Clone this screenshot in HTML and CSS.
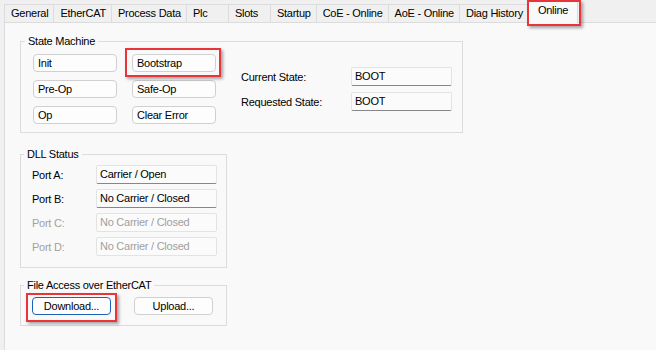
FILE: index.html
```html
<!DOCTYPE html>
<html lang="en">
<head>
    <meta charset="UTF-8">
    <title>Online</title>
    <link rel="stylesheet" href="styles.css">
</head>
<body>
    <div class="tabs">
        <div class="tab">General</div>
        <div class="tab">EtherCAT</div>
        <div class="tab">Process Data</div>
        <div class="tab tab-narrow">Plc</div>
        <div class="tab tab-narrow">Slots</div>
        <div class="tab">Startup</div>
        <div class="tab">CoE - Online</div>
        <div class="tab">AoE - Online</div>
        <div class="tab">Diag History</div>
        <div class="tab active marked">Online</div>
    </div>

    <div class="panel">
        <!-- State machine -->
        <fieldset class="group state-group">
            <legend>State Machine</legend>
            <div class="state-body">
                <div class="state-buttons">
                    <button class="btn">Init</button>
                    <button class="btn marked">Bootstrap</button>
                    <button class="btn">Pre-Op</button>
                    <button class="btn">Safe-Op</button>
                    <button class="btn">Op</button>
                    <button class="btn">Clear Error</button>
                </div>
                <div class="state-info">
                    <span class="label">Current State:</span>
                    <div class="field">BOOT</div>
                    <span class="label">Requested State:</span>
                    <div class="field">BOOT</div>
                </div>
            </div>
        </fieldset>

        <!-- DLL status -->
        <fieldset class="group small-group">
            <legend>DLL Status</legend>
            <div class="ports">
                <span class="label">Port A:</span>
                <div class="field">Carrier / Open</div>
                <span class="label">Port B:</span>
                <div class="field">No Carrier / Closed</div>
                <span class="label disabled">Port C:</span>
                <div class="field disabled">No Carrier / Closed</div>
                <span class="label disabled">Port D:</span>
                <div class="field disabled">No Carrier / Closed</div>
            </div>
        </fieldset>

        <!-- File access -->
        <fieldset class="group small-group file-group">
            <legend>File Access over EtherCAT</legend>
            <div class="file-buttons">
                <button class="btn btn-center focused marked">Download...</button>
                <button class="btn btn-center">Upload...</button>
            </div>
        </fieldset>
    </div>
</body>
</html>
```

FILE: styles.css
```css
/* Dialog look, Windows style */
body {
    margin: 0;
    background-color: #f0f0f0;
    color: #000000;
    font-family: "Liberation Sans", Arial, sans-serif;
    font-size: 11px;
    letter-spacing: -0.25px;
    height: 350px;
    overflow: hidden;
}

/* Tab strip */
.tabs {
    display: flex;
    align-items: flex-end;
    height: 22px;
    padding-left: 4px;
}

.tab {
    box-sizing: border-box;
    height: 18px;
    line-height: 17px;
    padding: 0 5px 0 6px;
    border: 1px solid #dcdcdc;
    border-bottom: none;
    margin-left: -1px;
    background-color: #f0f0f0;
    white-space: nowrap;
}

.tab:first-child {
    margin-left: 0;
}

.tab-narrow {
    min-width: 43px;
}

.tab.active {
    position: relative;
    z-index: 1;
    height: 22px;
    line-height: 16px;
    margin-bottom: -1px;
    padding: 0 9px;
    background-color: #f9f9f9;
}

/* Red annotation frames */
.marked {
    position: relative;
}

.marked::after {
    content: "";
    position: absolute;
    top: -7px;
    left: -8px;
    right: -6px;
    bottom: -6px;
    border: 2px solid #e8353b;
    box-shadow: 2px 2px 3px rgba(0, 0, 0, 0.35);
    pointer-events: none;
}

.tab.marked::after {
    top: -2px;
    left: -2px;
    right: -4px;
    bottom: -3px;
}

.file-buttons .marked::after {
    top: -5px;
    left: -7px;
    right: -7px;
    bottom: -8px;
}

/* Content panel */
.panel {
    box-sizing: border-box;
    width: 670px;
    height: 340px;
    margin-left: 4px;
    padding: 11px 0 0 15px;
    border: 1px solid #dcdcdc;
    background-color: #f9f9f9;
}

/* Group boxes */
.group {
    box-sizing: border-box;
    min-width: 0;
    margin: 0;
    border: 1px solid #dcdcdc;
}

.group legend {
    padding: 0 3px;
    margin-left: -8px;
    line-height: 14px;
}

.state-group {
    width: 443px;
    padding: 6px 0 8px 12px;
}

.small-group {
    width: 207px;
    margin-top: 14px;
    padding: 4px 9px 11px 11px;
}

.file-group {
    margin-top: 10px;
    padding: 5px 9px 10px 11px;
}

.state-body {
    display: flex;
    align-items: center;
    gap: 25px;
}

.state-buttons {
    display: grid;
    grid-template-columns: 84px 84px;
    column-gap: 15px;
    row-gap: 8px;
}

.state-info {
    display: grid;
    grid-template-columns: 110px 101px;
    row-gap: 6px;
    align-items: center;
}

.ports {
    display: grid;
    grid-template-columns: 64px 121px;
    row-gap: 5px;
    align-items: center;
}

.file-buttons {
    display: flex;
    gap: 23px;
}

/* Buttons */
.btn {
    box-sizing: border-box;
    height: 18px;
    padding: 0 4px;
    border: 1px solid #d0d0d0;
    border-radius: 4px;
    background-color: #fdfdfd;
    color: #000000;
    font-family: inherit;
    font-size: 11px;
    letter-spacing: -0.25px;
    line-height: 16px;
    text-align: left;
}

.btn-center {
    width: 79px;
    text-align: center;
}

.btn.focused {
    border-color: #1c63b8;
}

/* Read-only fields */
.field {
    box-sizing: border-box;
    height: 19px;
    line-height: 17px;
    padding: 0 3px;
    border: 1px solid #e3e3e3;
    border-bottom-color: #878787;
    border-radius: 2px;
    background-color: #fbfbfb;
    white-space: nowrap;
}

.field.disabled {
    border-bottom-color: #e3e3e3;
    color: #a0a0a0;
}

.label.disabled {
    color: #a0a0a0;
}
```
